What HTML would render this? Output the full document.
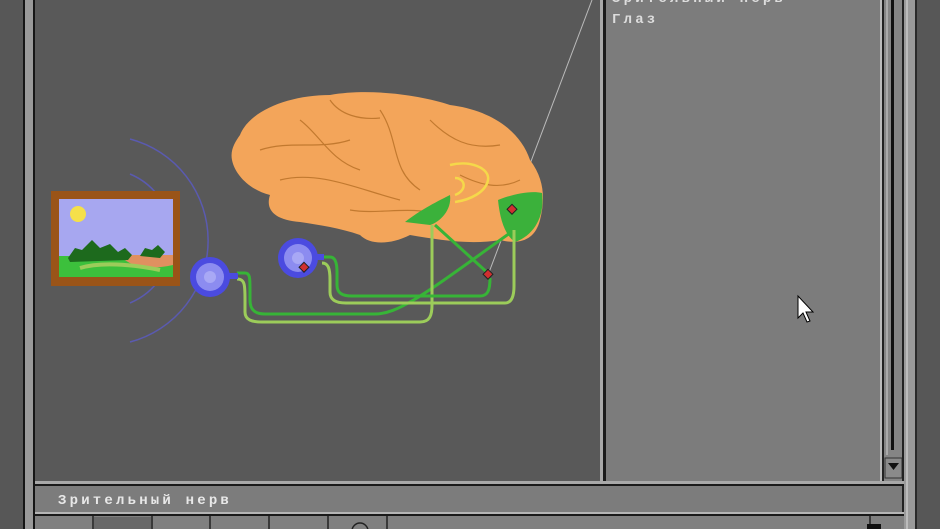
<!DOCTYPE html>
<html><head><meta charset="utf-8"><style>
html,body{margin:0;padding:0;width:940px;height:529px;overflow:hidden;background:#575757;font-family:"Liberation Mono","DejaVu Sans Mono",monospace}
</style></head><body>
<svg width="940" height="529" xmlns="http://www.w3.org/2000/svg" style="position:absolute;left:0;top:0">
<rect width="940" height="529" fill="#575757"/>
<rect x="23" y="0" width="2" height="529" fill="#151515"/>
<rect x="25" y="0" width="8" height="529" fill="#999"/>
<rect x="33" y="0" width="2" height="529" fill="#151515"/>
<rect x="35" y="0" width="565" height="481" fill="#595959"/>
<rect x="600" y="0" width="3" height="481" fill="#a8a8a8"/>
<rect x="603" y="0" width="3" height="481" fill="#1a1a1a"/>
<rect x="606" y="0" width="276" height="481" fill="#7c7c7c"/>
<rect x="880" y="0" width="2" height="481" fill="#bbb"/>
<rect x="882" y="0" width="2" height="481" fill="#222"/>
<rect x="884" y="0" width="18" height="481" fill="#858585"/>
<rect x="891" y="0" width="3" height="450" fill="#111"/>
<rect x="886" y="0" width="2" height="455" fill="#aaa"/>
<rect x="885" y="458" width="17" height="20" fill="#8a8a8a" stroke="#333" stroke-width="1"/>
<polygon points="888,463 899,463 893.5,470" fill="#111"/>
<rect x="902" y="0" width="2" height="529" fill="#222"/>
<rect x="904" y="0" width="11" height="529" fill="#9a9a9a"/>
<rect x="906" y="0" width="2" height="529" fill="#bbb"/>
<rect x="915" y="0" width="2" height="529" fill="#2a2a2a"/>
<rect x="917" y="0" width="23" height="529" fill="#575757"/>
<rect x="35" y="481" width="869" height="3" fill="#a8a8a8"/>
<rect x="35" y="484" width="869" height="2" fill="#1a1a1a"/>
<rect x="35" y="486" width="867" height="26" fill="#7c7c7c"/>
<rect x="35" y="512" width="869" height="2" fill="#b5b5b5"/>
<rect x="35" y="514" width="869" height="2" fill="#1a1a1a"/>
<rect x="35" y="516" width="869" height="13" fill="#808080"/>
<g fill="none" stroke="#222" stroke-width="1.5">
<line x1="93" y1="516" x2="93" y2="529"/><line x1="152" y1="516" x2="152" y2="529"/>
<line x1="210" y1="516" x2="210" y2="529"/><line x1="269" y1="516" x2="269" y2="529"/>
<line x1="328" y1="516" x2="328" y2="529"/><line x1="387" y1="516" x2="387" y2="529"/>
<line x1="870" y1="516" x2="870" y2="529"/>
</g>
<rect x="94" y="517" width="57" height="12" fill="#686868"/>
<rect x="867" y="524" width="14" height="5" fill="#111"/>
<circle cx="360" cy="531" r="8" fill="none" stroke="#222" stroke-width="1.5"/>
<g font-family="Liberation Mono, DejaVu Sans Mono, monospace" font-weight="bold" font-size="14" letter-spacing="3.2">
<text x="58" y="504" fill="#e8e8e8">Зрительный нерв</text>
<text x="612" y="2" fill="#ddd">Зрительный нерв</text>
<text x="612" y="23" fill="#ddd">Глаз</text>
</g>
<line x1="592" y1="0" x2="488" y2="275" stroke="#bbb" stroke-width="1"/>
<g fill="none" stroke="#5a5ab0" stroke-width="1.5">
<path d="M130,139 A105,105 0 0 1 130,342"/>
<path d="M130,174 A70,70 0 0 1 130,303"/>
</g>
<path d="M240,135 C250,110 290,95 330,95 C370,88 420,95 450,105 C490,110 520,130 530,160 C545,180 545,200 540,220 C535,240 520,245 500,240 C470,245 440,240 410,235 C390,245 370,245 360,235 C340,228 320,225 300,222 C275,220 265,210 270,195 C250,190 235,175 232,160 C230,150 235,142 240,135 Z" fill="#f3a55a"/>
<g stroke="#b66f25" stroke-width="1.2" fill="none" opacity="0.8">
<path d="M260,150 C290,140 320,150 350,140"/><path d="M300,120 C320,135 330,160 360,170"/>
<path d="M380,110 C400,140 390,170 420,190"/><path d="M280,180 C320,170 360,190 400,200"/>
<path d="M430,120 C450,140 470,150 500,145"/><path d="M350,210 C380,215 410,205 440,215"/>
<path d="M460,175 C480,185 500,190 520,180"/><path d="M330,100 C340,115 360,120 380,118"/>
</g>
<path d="M450,165 C470,160 490,168 488,180 C486,192 470,200 455,202 M455,178 C465,178 468,190 455,195" stroke="#f5d84a" stroke-width="2.5" fill="none"/>
<path d="M405,222 C420,210 440,200 450,195 C452,210 440,222 430,225 Z" fill="#3bb13b"/>
<path d="M498,200 C510,195 530,190 542,193 C545,215 535,235 515,242 C505,235 500,220 498,200 Z" fill="#3bb13b"/>
<g fill="none" stroke-width="3">
<path d="M237,273 H245 C250,273 250,278 250,290 V300 C250,310 255,314 265,314 H375 C400,314 430,290 510,233" stroke="#37b437"/>
<path d="M237,279 C245,279 245,285 245,300 V312 C245,320 252,322 262,322 H420 C430,322 432,315 432,305 V225" stroke="#9ccc5a"/>
<path d="M322,257 H330 C335,257 337,262 337,272 V285 C337,293 342,296 352,296 H480 C488,296 490,290 490,278 M490,275 L435,225" stroke="#37b437"/>
<path d="M322,263 C328,263 330,268 330,280 V292 C330,300 336,303 346,303 H505 C512,303 514,296 514,286 V230" stroke="#9ccc5a"/>
</g>
<circle cx="210" cy="277" r="20" fill="#4b4be0"/><circle cx="210" cy="277" r="14" fill="#8c8cf0"/><circle cx="210" cy="277" r="6" fill="#a8a8f5"/>
<rect x="228" y="273" width="10" height="6" fill="#4b4be0"/>
<circle cx="298" cy="258" r="20" fill="#4b4be0"/><circle cx="298" cy="258" r="14" fill="#8c8cf0"/><circle cx="298" cy="258" r="6" fill="#a8a8f5"/>
<rect x="316" y="254" width="8" height="6" fill="#4b4be0"/>
<g stroke="#222" stroke-width="1" fill="#d03030">
<rect x="300" y="264" width="7" height="7" transform="rotate(45 304 268)"/>
<rect x="484" y="271" width="7" height="7" transform="rotate(45 488 275)"/>
<rect x="508" y="206" width="7" height="7" transform="rotate(45 512 210)"/>
</g>
<rect x="51" y="191" width="129" height="95" fill="#9a5418"/>
<rect x="59" y="199" width="114" height="78" fill="#a7a7f0"/>
<circle cx="78" cy="214" r="8" fill="#f5e04a"/>
<rect x="59" y="256" width="114" height="21" fill="#3cc03c"/>
<path d="M120,255 H173 V265 C150,270 130,268 120,255 Z" fill="#e09060"/>
<path d="M68,258 L75,248 L82,250 L92,240 L100,248 L110,244 L118,252 L125,248 L132,255 L128,260 L70,262 Z" fill="#1d6a1d"/>
<path d="M140,256 L145,248 L152,250 L158,245 L165,252 L160,258 Z" fill="#1d6a1d"/>
<path d="M80,268 C100,262 130,264 160,270" stroke="#9ccc5a" stroke-width="4" fill="none"/>
<path d="M798,296 V318 L803,313 L807,322 L810,321 L806,312 L813,312 Z" fill="#fff" stroke="#000" stroke-width="1"/>
</svg>
</body></html>
